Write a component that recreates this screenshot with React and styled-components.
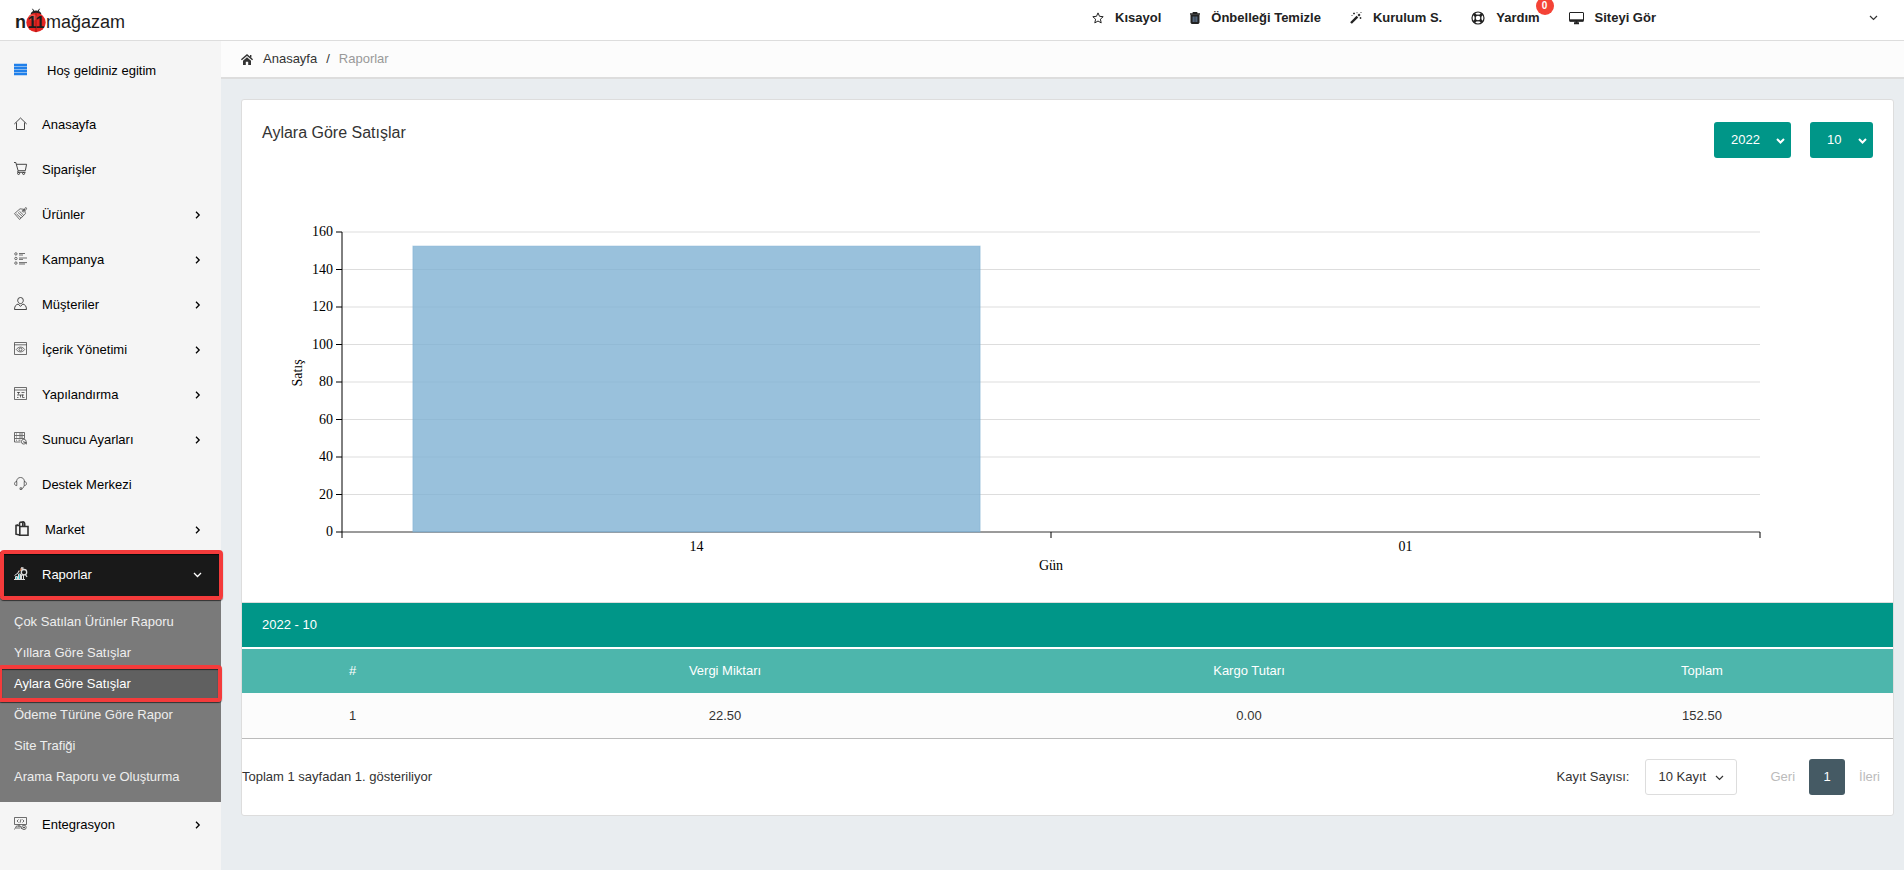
import React, { useLayoutEffect, useRef, useState } from "react";
import styled, { createGlobalStyle, css } from "styled-components";

const GlobalStyle = createGlobalStyle`
  *, *::before, *::after { box-sizing: border-box; }
  body {
    margin: 0;
    background: #e9edf0;
    color: #333;
    font: 13px/20px "Liberation Sans", Arial, sans-serif;
  }
  a { color: inherit; text-decoration: none; }
  ul { list-style: none; margin: 0; padding: 0; }
  button, select { font: inherit; }
`;

/* ---------- icons ---------- */

const IconSvg = styled.svg.attrs({ "aria-hidden": true })`
  display: block;
  flex: none;
  width: ${(p) => p.$w || 13}px;
  height: ${(p) => p.$h || 13}px;
  fill: none;
  stroke: currentColor;
  stroke-width: ${(p) => p.$stroke || 1};
  overflow: visible;
`;

const Chevron = ({ down, w = 1.3 }) =>
  down ? (
    <IconSvg $w={9} $h={6} $stroke={w} viewBox="0 0 9 6">
      <path d="M1 1l3.5 3.5L8 1" />
    </IconSvg>
  ) : (
    <IconSvg $w={5} $h={8} $stroke={w} viewBox="0 0 5 8">
      <path d="M1 .8L4.200 4 1 7.200" />
    </IconSvg>
  );

const menuIcons = {
  home: <path d="M.3 7L6.500 1l6.200 6M2.500 5.500v7h8v-7" />,
  cart: (
    <path d="M0 .5h1.8l2.3 8.2h7.2L12.6 2.3H2.5M4.1 8.7l-.5 1.600h8M4.600 10.500a1 1 0 100 2 1 1 0 000-2zM9.600 10.500a1 1 0 100 2 1 1 0 000-2z" />
  ),
  tag: (
    <path d="M.5 6.6L6 1.8l4.6.6.8 4.3-5.8 5.8zM2.4 6.8l4.6 4.3M4 5.4l4.6 4.3M5.4 4.2l4.2 4M8.6 4.8a1 1 0 101.2-1.6 1 1 0 00-1.2 1.6zM9.4 3.8L11 1.2c.8-1.2 2-.4 1.4.7l-1 1.6" />
  ),
  list: (
    <path d="M1.9.7a1.2 1.2 0 100 2.4 1.2 1.2 0 000-2.4zM1.9 5.3a1.2 1.2 0 100 2.4 1.2 1.2 0 000-2.4zM1.9 9.9a1.2 1.2 0 100 2.4 1.2 1.2 0 000-2.4zM5 1.5h6M5 3h4M5 6h8M5 7.4h4M5 10.6h8M5 12h6" />
  ),
  user: (
    <path d="M6.5.5a2.8 2.8 0 00-2.8 2.8c0 1.700 1.200 3.300 2.800 3.300s2.800-1.600 2.800-3.300A2.800 2.800 0 006.500.500zM4.200 7C2 7.700.600 8.800.500 12.500h12C12.400 8.800 11 7.700 8.800 7L6.500 9.400z" />
  ),
  eye: (
    <path d="M.5.5h12v12H.5zM.5 2.800h12M2.300 7.500c2.200-3.200 6.200-3.200 8.400 0-2.200 3.200-6.200 3.200-8.400 0zM6.500 6a1.500 1.500 0 100 3 1.500 1.500 0 000-3z" />
  ),
  settings: (
    <path d="M.5.5h12v12H.5zM.5 3h12M3 5.500h3M7.500 5.500h3M4.500 5v2.500M3 8h7M6.500 8v2.500M3 10.500h1.500M8.500 7.500v3h2" />
  ),
  server: (
    <path d="M.5.500h10v3h-10zM.500 3.500v3h10v-3M.500 6.500v3.500h6M2 2h1M5 2h4M2 5h1M5 5h4M2 8.200h1M4.500 8.200h2M9.800 7.300a2.400 2.400 0 100 4.800 2.400 2.400 0 000-4.800zM9.800 9v1.400h2.600v2" />
  ),
  headset: (
    <path d="M2.500 4.800C2.700 1.800 4.300.500 6.500.500s3.800 1.300 4 4.300M2.800 4.600C1.300 4.600.500 5.500.500 6.600s.8 2 2.300 2zM10.200 4.600c1.500 0 2.300.9 2.300 2s-.8 2-2.300 2zM10 8.800c-.2 1.700-1 2.500-2.200 2.700M6 10.800h1.800v1.700H6z" />
  ),
  code: (
    <path d="M.5 7.500v-7h12v7zM4.500 2.500L3 4l1.500 1.500M8.500 2.500L10 4 8.500 5.500M7 2.200L6 5.800M.500 12.500l2-3.500h4l1 3M2 11h4M5 7.500V10M10 8.200a2.200 2.200 0 100 4.400 2.200 2.200 0 000-4.400zM10 9.500v2M9 10.500h2" />
  ),
};

const MenuIcon = ({ name }) => {
  if (name === "market")
    return (
      <IconSvg $w={16} $h={15} $stroke={1.6} viewBox="-1 0 16 15">
        <path d="M4.800 5.500h8.200v8.700H4.800z" />
        <path d="M4.800 4.500H1v8.700l3.500.8M1 4.500l2-.7M4.500 5V2.500c.3-2 3-2 3.300 0V5M6.500 2c.6-1.800 3.200-1.400 3.200.8V5" />
      </IconSvg>
    );
  if (name === "chart")
    return (
      <IconSvg viewBox="0 0 13 13">
        <path d="M0 12.500h11M1.500 12V9.500h2V12M4.500 12V7h2v5M7.500 12V8h2v4M.5 8.500L4 6l1-2.500" />
        <path stroke="#3fc1c9" d="M5.500 12V7.500M2.500 12v-2" />
        <path stroke="#e88b5a" d="M5.500 4.500L8 1.500M6 2h3" />
        <path strokeWidth="1.300" d="M10 2.500a2.700 2.700 0 100 5.400 2.700 2.700 0 000-5.400zM11.500 7.500l1.500 2.500M7 1h2.500" />
      </IconSvg>
    );
  const bold = name === "home" || name === "cart" || name === "user";
  return (
    <IconSvg $stroke={bold ? 0.9 : 0.7} viewBox="0 0 13 13">
      {menuIcons[name]}
    </IconSvg>
  );
};

const StarIcon = () => (
  <IconSvg $w={12} $h={12} viewBox="0 0 12 12">
    <path d="M6 .9l1.500 3.400 3.700.4-2.800 2.500.8 3.700L6 9l-3.200 1.900.8-3.700L.8 4.700l3.700-.4z" />
  </IconSvg>
);
const TrashIcon = () => (
  <IconSvg $w={10} $h={12} viewBox="0 0 10 12">
    <path d="M0 2h10M3.300 1.800V.7h3.400v1.100" strokeWidth="1.300" />
    <path d="M1 3h8v7.600c0 .6-.3.900-.9.900H1.900c-.6 0-.9-.3-.9-.9z" fill="currentColor" />
    <path d="M3.200 4.500V10M5 4.500V10M6.800 4.500V10" stroke="#7a9cc4" strokeWidth=".8" />
  </IconSvg>
);
const WandIcon = () => (
  <IconSvg $w={12} $h={12} viewBox="0 0 12 12">
    <path d="M1 11l6.400-6.400" strokeWidth="2.400" />
    <path d="M8.300 3.700L9.800 2.200" strokeWidth="2" />
    <path d="M3 1.500h2M4 .5v2M10.500.5h1M9.500 6h2M10.500 5v2M6.500.7h1M1.500 3.500h1" strokeWidth=".8" />
  </IconSvg>
);
const LifeRingIcon = () => (
  <IconSvg $w={14} $h={14} viewBox="0 0 14 14">
    <circle cx="7" cy="7" r="6" strokeWidth="1.200" />
    <circle cx="7" cy="7" r="2.900" strokeWidth="1.200" />
    <path d="M2.800 2.800l2.100 2.100M11.200 2.800L9.100 4.900M2.800 11.200l2.100-2.100M11.200 11.200L9.100 9.100" strokeWidth="2.800" />
  </IconSvg>
);
const MonitorIcon = () => (
  <IconSvg $w={15} $h={12} viewBox="0 0 15 12">
    <rect x=".5" y=".5" width="14" height="8.500" rx=".5" />
    <path d="M.5 8.500h14" strokeWidth="2.400" />
    <path d="M5 11.200h5M7.500 9v2" strokeWidth="2" />
  </IconSvg>
);
const HomeIcon = () => (
  <IconSvg $w={12} $h={11} viewBox="0 0 12 11">
    <path d="M.4 5.700L6 .9l5.600 4.800" strokeWidth="1.500" />
    <path d="M2 6.700l4-3.400 4 3.400V11H7.200V7.800H4.800V11H2z" fill="currentColor" stroke="none" />
    <path d="M9.700 1v2.500" strokeWidth="1.400" />
  </IconSvg>
);
const BarsIcon = () => (
  <IconSvg $w={13} $h={11} $stroke={2.3} viewBox="0 0 13 11">
    <path d="M0 1h13M0 4h13M0 7h13M0 10h13" />
  </IconSvg>
);

/* ---------- header ---------- */

const Page = styled.div`
  display: flex;
  flex-direction: column;
  min-height: 100vh;
`;

const Header = styled.header`
  display: flex;
  align-items: flex-start;
  height: 41px;
  padding: 0 26px 0 15px;
  background: #fff;
  border-bottom: 1px solid #ddd;
  color: #222;
`;

const Logo = styled.a`
  display: flex;
  align-items: flex-end;
  height: 34px;
  font-size: 18px;
  line-height: 24px;
  color: #1d1d1d;
`;

const Bug = styled.svg`
  width: 20px;
  height: 25px;
  display: block;
  margin-bottom: 1px;
`;

const TopNav = styled.nav`
  display: flex;
  gap: 29px;
  margin: 0 213px 0 auto;
  padding-top: 8px;
`;

const TopLink = styled.a`
  position: relative;
  display: flex;
  align-items: center;
  gap: 11px;
  font-weight: 700;
  white-space: nowrap;
`;

const Badge = styled.span`
  position: absolute;
  top: -11px;
  right: -14px;
  width: 18px;
  height: 18px;
  border-radius: 50%;
  background: #f44336;
  color: #fff;
  font-size: 10px;
  line-height: 18px;
  text-align: center;
`;

const UserMenu = styled.button`
  display: flex;
  align-items: center;
  height: 36px;
  padding: 0;
  border: 0;
  background: none;
  color: #333;
`;

/* ---------- sidebar ---------- */

const Body = styled.div`
  display: flex;
  flex: 1;
`;

const Sidebar = styled.aside`
  flex: 0 0 221px;
  background: #f5f5f5;
  color: #000;
`;

const Welcome = styled.div`
  display: flex;
  align-items: center;
  gap: 20px;
  height: 60px;
  margin-bottom: 1px;
  padding: 0 14px;
  & > button {
    padding: 0 0 3px;
    border: 0;
    background: none;
    color: #2080ea;
  }
`;

const ring = css`
  position: relative;
  &::after {
    content: "";
    position: absolute;
    border: 4px solid #f43b3b;
    border-radius: 4px;
    box-shadow: 0 1px 1px rgba(0, 0, 0, 0.6), inset 0 1px 1px rgba(0, 0, 0, 0.6);
    pointer-events: none;
  }
`;

const MenuLink = styled.a`
  display: flex;
  align-items: center;
  gap: 15px;
  height: 45px;
  padding: 0 21px 0 14px;
  & > span { flex: 1; }
  & > svg:first-child { margin-bottom: 2px; color: #333; }
  ${(p) =>
    p.$active &&
    css`
      ${ring}
      padding-right: 19px;
      background: #191919;
      color: #fff;
      &::after { inset: -2px -2px -3px 0; z-index: 1; }
      & > svg:first-child { color: #ddd; }
    `}
`;

const SubMenu = styled.ul`
  padding: 9px 0 10px;
  background: #7a7a7a;
  color: #eee;
`;

const SubLink = styled.a`
  display: block;
  height: 31px;
  padding: 0 14px;
  line-height: 31px;
  ${(p) =>
    p.$active &&
    css`
      ${ring}
      background: #606060;
      color: #fff;
      &::after { inset: -3px -1px -3px -2px; }
    `}
`;

/* ---------- content ---------- */

const Main = styled.main`
  flex: 1;
  min-width: 0;
`;

const Breadcrumb = styled.nav`
  display: flex;
  align-items: center;
  height: 38px;
  padding: 0 20px;
  background: #fcfcfc;
  border-bottom: 2px solid #ddd;
  & > a { display: flex; align-items: center; gap: 10px; }
  & > i { font-style: normal; margin: 0 9px; }
  & > span { color: #999; }
`;

const Card = styled.section`
  margin: 20px 10px 20px 20px;
  background: #fff;
  border: 1px solid #ddd;
  border-radius: 3px;
`;

const CardHead = styled.div`
  display: flex;
  gap: 19px;
  padding: 22px 20px 0;
  & > h1 {
    flex: 1;
    margin: 0;
    font-size: 16px;
    font-weight: 400;
    line-height: 22px;
  }
`;

const SelectBox = styled.span`
  position: relative;
  display: inline-block;
  color: ${(p) => (p.$teal ? "#fff" : "#333")};
  & > select {
    appearance: none;
    display: block;
    width: ${(p) => p.$width}px;
    height: 36px;
    padding: 0 0 0 ${(p) => (p.$teal ? 17 : 12)}px;
    border: ${(p) => (p.$teal ? "0" : "1px solid #ddd")};
    border-radius: 3px;
    background: ${(p) => (p.$teal ? "#009688" : "#fff")};
    color: inherit;
  }
  & > svg {
    position: absolute;
    top: 16px;
    right: ${(p) => (p.$teal ? 6 : 13)}px;
    pointer-events: none;
  }
`;

const ChartBox = styled.div`
  height: 444px;
  overflow: hidden;
  & > svg { display: block; width: 100%; height: 100%; }
  & text { font: 14px "Liberation Serif", "Times New Roman", serif; fill: #000; }
`;

const TableTitle = styled.h2`
  margin: 0;
  padding: 0 20px;
  height: 45px;
  border-top: 1px solid #ddd;
  background: #009688;
  background-clip: padding-box;
  color: #fff;
  font-size: 13px;
  font-weight: 400;
  line-height: 44px;
`;

const Table = styled.table`
  width: 100%;
  margin-top: 2px;
  table-layout: fixed;
  border-collapse: separate;
  border-spacing: 0;
  text-align: center;
  th {
    height: 44px;
    padding: 0;
    background: #4db6ac;
    color: #fff;
    font-weight: 400;
  }
  th:first-child { width: 221px; }
  th:last-child { width: 382px; }
  td {
    height: 46px;
    padding: 0;
    background: #fcfcfc;
    border-bottom: 1px solid #bbb;
  }
`;

const Footer = styled.div`
  display: flex;
  align-items: center;
  justify-content: space-between;
  padding: 20px 13px 20px 0;
`;

const Pager = styled.div`
  display: flex;
  align-items: center;
  & > label { margin-right: 16px; }
`;

const Pages = styled.div`
  display: flex;
  align-items: center;
  gap: 14px;
  margin-left: 33px;
`;

const PageButton = styled.button`
  height: 36px;
  min-width: ${(p) => (p.$current ? 36 : 0)}px;
  padding: 0;
  border: 0;
  border-radius: 3px;
  background: ${(p) => (p.$current ? "#455a64" : "none")};
  color: ${(p) => (p.$current ? "#fff" : "#bbb")};
`;

/* ---------- chart ---------- */

const days = [
  { day: "14", total: 152.5 },
  { day: "01", total: 0 },
];
const yTicks = [0, 20, 40, 60, 80, 100, 120, 140, 160];

function SalesChart() {
  const box = useRef(null);
  const [width, setWidth] = useState(1000);
  useLayoutEffect(() => {
    const measure = () => setWidth(box.current.clientWidth);
    measure();
    const ro = new ResizeObserver(measure);
    ro.observe(box.current);
    return () => ro.disconnect();
  }, []);

  const left = 100;
  const right = width - 133;
  const top = 74;
  const bottom = 374;
  const y = (v) => bottom - ((bottom - top) * v) / 160;
  const step = (right - left) / days.length;

  return (
    <ChartBox ref={box}>
      <svg role="img" aria-label="Aylara Göre Satışlar">
        {yTicks.map((t) => (
          <g key={t}>
            <line x1={left} x2={right} y1={y(t)} y2={y(t)} stroke="#ddd" />
            <line x1={left - 6} x2={left} y1={y(t)} y2={y(t)} stroke="#000" />
            <text x={left - 9} y={y(t) + 4} textAnchor="end">{t}</text>
          </g>
        ))}
        <line x1={left} x2={left} y1={top} y2={bottom + 6} stroke="#000" />
        <line x1={left} x2={right} y1={bottom} y2={bottom} stroke="#000" strokeOpacity=".7" />
        {days.map((d, i) => (
          <g key={d.day}>
            {d.total > 0 && (
              <rect
                x={left + step * (i + 0.1)}
                y={y(d.total)}
                width={step * 0.8}
                height={bottom - y(d.total)}
                fill="#80b1d3"
                fillOpacity=".8"
                stroke="#80b1d3"
                strokeOpacity=".5"
              />
            )}
            <line x1={left + step * (i + 1)} x2={left + step * (i + 1)} y1={bottom} y2={bottom + 6} stroke="#000" />
            <text x={left + step * (i + 0.5)} y={bottom + 19} textAnchor="middle">{d.day}</text>
          </g>
        ))}
        <text x={(left + right) / 2} y={bottom + 38} textAnchor="middle">Gün</text>
        <text transform="translate(60 215) rotate(-90)" textAnchor="middle">Satış</text>
      </svg>
    </ChartBox>
  );
}

/* ---------- page ---------- */

const menu = [
  { label: "Anasayfa", icon: "home" },
  { label: "Siparişler", icon: "cart" },
  { label: "Ürünler", icon: "tag", more: true },
  { label: "Kampanya", icon: "list", more: true },
  { label: "Müşteriler", icon: "user", more: true },
  { label: "İçerik Yönetimi", icon: "eye", more: true },
  { label: "Yapılandırma", icon: "settings", more: true },
  { label: "Sunucu Ayarları", icon: "server", more: true },
  { label: "Destek Merkezi", icon: "headset" },
  { label: "Market", icon: "market", more: true },
  {
    label: "Raporlar",
    icon: "chart",
    more: true,
    children: [
      "Çok Satılan Ürünler Raporu",
      "Yıllara Göre Satışlar",
      "Aylara Göre Satışlar",
      "Ödeme Türüne Göre Rapor",
      "Site Trafiği",
      "Arama Raporu ve Oluşturma",
    ],
  },
  { label: "Entegrasyon", icon: "code", more: true },
];

export default function App() {
  return (
    <Page>
      <GlobalStyle />
      <Header>
        <Logo href="#" aria-label="n11 mağazam">
          <b>n</b>
          <Bug viewBox="0 0 20 25">
            <path d="M6.500.800l1.500 2.700M13.500.800L12 3.500" stroke="#222" strokeWidth="1" fill="none" />
            <path d="M4.500 6.500c.5-5.500 10.500-5.500 11 0z" fill="#222" />
            <circle cx="10" cy="14.500" r="9.700" fill="#e52421" />
            <ellipse cx="7" cy="9.500" rx="4" ry="3" fill="#f0534a" />
            <path d="M10 5v19" stroke="#8e1512" strokeWidth=".8" />
            <text x="10" y="20" textAnchor="middle" fontSize="16" fontWeight="700" fill="#1d1d1d">11</text>
          </Bug>
          <span>mağazam</span>
        </Logo>
        <TopNav>
          <TopLink href="#"><StarIcon />Kısayol</TopLink>
          <TopLink href="#"><TrashIcon />Önbelleği Temizle</TopLink>
          <TopLink href="#"><WandIcon />Kurulum S.</TopLink>
          <TopLink href="#"><LifeRingIcon />Yardım<Badge>0</Badge></TopLink>
          <TopLink href="#"><MonitorIcon />Siteyi Gör</TopLink>
        </TopNav>
        <UserMenu aria-label="Kullanıcı menüsü"><Chevron down w={1.2} /></UserMenu>
      </Header>
      <Body>
        <Sidebar>
          <Welcome>
            <button aria-label="Menü"><BarsIcon /></button>
            <span>Hoş geldiniz egitim</span>
          </Welcome>
          <ul>
            {menu.map((m) => (
              <li key={m.label}>
                <MenuLink href="#" $active={!!m.children}>
                  <MenuIcon name={m.icon} />
                  <span>{m.label}</span>
                  {m.more && <Chevron down={!!m.children} />}
                </MenuLink>
                {m.children && (
                  <SubMenu>
                    {m.children.map((c) => (
                      <li key={c}>
                        <SubLink href="#" $active={c === "Aylara Göre Satışlar"}>{c}</SubLink>
                      </li>
                    ))}
                  </SubMenu>
                )}
              </li>
            ))}
          </ul>
        </Sidebar>
        <Main>
          <Breadcrumb aria-label="Konum">
            <a href="#"><HomeIcon />Anasayfa</a>
            <i>/</i>
            <span>Raporlar</span>
          </Breadcrumb>
          <Card>
            <CardHead>
              <h1>Aylara Göre Satışlar</h1>
              <SelectBox $teal $width={77}>
                <select aria-label="Yıl" defaultValue="2022"><option>2022</option></select>
                <Chevron down w={2} />
              </SelectBox>
              <SelectBox $teal $width={63}>
                <select aria-label="Ay" defaultValue="10"><option>10</option></select>
                <Chevron down w={2} />
              </SelectBox>
            </CardHead>
            <SalesChart />
            <TableTitle>2022 - 10</TableTitle>
            <Table>
              <thead>
                <tr><th>#</th><th>Vergi Miktarı</th><th>Kargo Tutarı</th><th>Toplam</th></tr>
              </thead>
              <tbody>
                <tr><td>1</td><td>22.50</td><td>0.00</td><td>152.50</td></tr>
              </tbody>
            </Table>
            <Footer>
              <span>Toplam 1 sayfadan 1. gösteriliyor</span>
              <Pager>
                <label htmlFor="page-size">Kayıt Sayısı:</label>
                <SelectBox $width={92}>
                  <select id="page-size" defaultValue="10 Kayıt"><option>10 Kayıt</option></select>
                  <Chevron down w={1.2} />
                </SelectBox>
                <Pages>
                  <PageButton disabled>Geri</PageButton>
                  <PageButton $current>1</PageButton>
                  <PageButton disabled>İleri</PageButton>
                </Pages>
              </Pager>
            </Footer>
          </Card>
        </Main>
      </Body>
    </Page>
  );
}
